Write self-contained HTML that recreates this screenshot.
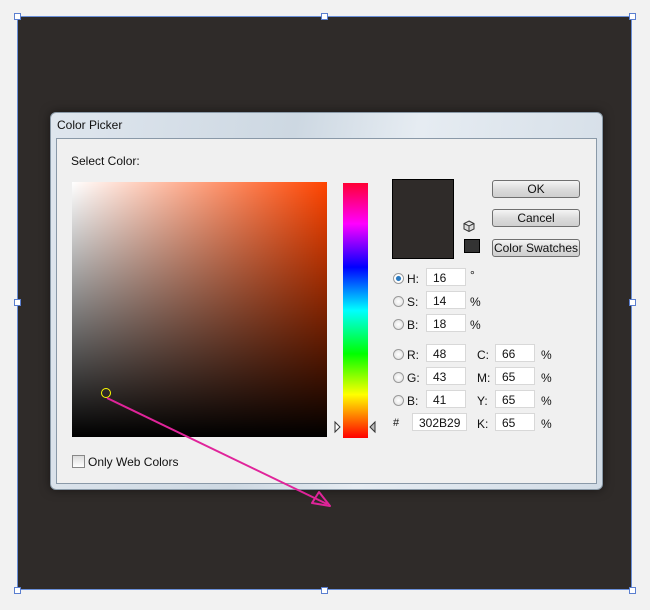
<!DOCTYPE html>
<html><head><style>
body{margin:0;width:650px;height:610px;background:#f2f2f2;position:relative;overflow:hidden;font-family:"Liberation Sans",sans-serif;font-size:12px;color:#111}
.a{position:absolute}
.h{position:absolute;width:5px;height:5px;background:#fff;border:1px solid #5b7fd0}
.btn{position:absolute;left:492px;width:86px;height:16px;border:1px solid #707070;border-radius:3px;background:linear-gradient(#f4f4f4,#dcdcdc 50%,#cfcfcf);text-align:center;line-height:16px;font-size:12px}
.in{position:absolute;width:40px;height:18px;background:#fff;border:1px solid #d8d8d8;line-height:18px;box-sizing:border-box;padding-left:6px;font-size:12px}
.rd{position:absolute;width:11px;height:11px;border-radius:50%;border:1px solid #9a9a9a;background:radial-gradient(#fff,#ddd);box-sizing:border-box}
.lb{position:absolute;font-size:12px}
</style></head><body>
<div class="a" style="left:17px;top:16px;width:615px;height:574px;background:#2f2b29;border:1px solid #6a8fd8;box-sizing:border-box"></div>
<div class="h" style="left:14px;top:13px"></div><div class="h" style="left:321px;top:13px"></div><div class="h" style="left:629px;top:13px"></div>
<div class="h" style="left:14px;top:299px"></div><div class="h" style="left:629px;top:299px"></div>
<div class="h" style="left:14px;top:587px"></div><div class="h" style="left:321px;top:587px"></div><div class="h" style="left:629px;top:587px"></div>
<div class="a" style="left:50px;top:112px;width:553px;height:378px;border-radius:6px;background:linear-gradient(100deg,#dfe6ee,#cdd8e2 40%,#e6ecf2 60%,#d2dce6);border:1px solid #8a9aa8;box-sizing:border-box;box-shadow:0 0 10px rgba(0,0,0,.5)"></div>
<div class="lb" style="left:57px;top:118px">Color Picker</div>
<div class="a" style="left:56px;top:138px;width:541px;height:346px;background:#f0f0f0;border:1px solid #8a99a8;box-sizing:border-box"></div>
<div class="lb" style="left:71px;top:154px">Select Color:</div>
<div class="a" style="left:72px;top:182px;width:255px;height:255px;background:linear-gradient(transparent,#000),linear-gradient(90deg,#fff,#ff4400)"></div>
<div class="a" style="left:101px;top:388px;width:8px;height:8px;border:1px solid #ff0;border-radius:50%"></div>
<div class="a" style="left:343px;top:183px;width:25px;height:255px;background:linear-gradient(#ff0033,#ff00ff 16%,#0000ff 33%,#00ffff 50%,#00ff00 67%,#ffff00 83%,#ff0000)"></div>
<svg class="a" style="left:332px;top:420px" width="46" height="16"><path d="M3 2 L8 7 L3 12 Z" fill="#fff" stroke="#333"/><path d="M43 2 L38 7 L43 12 Z" fill="#bbb" stroke="#333"/></svg>
<div class="a" style="left:392px;top:179px;width:62px;height:80px;background:#2f2b29;border:1px solid #000;box-sizing:border-box"></div>
<svg class="a" style="left:463px;top:220px" width="12" height="12"><path d="M6 1 L11 3.5 L11 9 L6 11.5 L1 9 L1 3.5 Z M1 3.5 L6 6 L11 3.5 M6 6 L6 11.5" fill="#ddd" stroke="#333"/></svg>
<div class="a" style="left:464px;top:239px;width:16px;height:14px;background:#333;border:1px solid #000;box-sizing:border-box"></div>
<div class="btn" style="top:180px">OK</div>
<div class="btn" style="top:209px">Cancel</div>
<div class="btn" style="top:239px">Color Swatches</div>
<div class="rd" style="left:393px;top:273px;background:radial-gradient(#2a7ac0 35%,#fff 45%)"></div><div class="lb" style="left:407px;top:272px">H:</div><div class="in" style="left:426px;top:268px">16</div><div class="lb" style="left:470px;top:268px">°</div>
<div class="rd" style="left:393px;top:296px"></div><div class="lb" style="left:407px;top:295px">S:</div><div class="in" style="left:426px;top:291px">14</div><div class="lb" style="left:470px;top:295px">%</div>
<div class="rd" style="left:393px;top:319px"></div><div class="lb" style="left:407px;top:318px">B:</div><div class="in" style="left:426px;top:314px">18</div><div class="lb" style="left:470px;top:318px">%</div>
<div class="rd" style="left:393px;top:349px"></div><div class="lb" style="left:407px;top:348px">R:</div><div class="in" style="left:426px;top:344px">48</div>
<div class="rd" style="left:393px;top:372px"></div><div class="lb" style="left:407px;top:371px">G:</div><div class="in" style="left:426px;top:367px">43</div>
<div class="rd" style="left:393px;top:395px"></div><div class="lb" style="left:407px;top:394px">B:</div><div class="in" style="left:426px;top:390px">41</div>
<div class="lb" style="left:393px;top:417px;font-size:11px">#</div><div class="in" style="left:412px;top:413px;width:55px;padding-left:6px">302B29</div>
<div class="lb" style="left:477px;top:348px">C:</div><div class="in" style="left:495px;top:344px">66</div><div class="lb" style="left:541px;top:348px">%</div>
<div class="lb" style="left:477px;top:371px">M:</div><div class="in" style="left:495px;top:367px">65</div><div class="lb" style="left:541px;top:371px">%</div>
<div class="lb" style="left:477px;top:394px">Y:</div><div class="in" style="left:495px;top:390px">65</div><div class="lb" style="left:541px;top:394px">%</div>
<div class="lb" style="left:477px;top:417px">K:</div><div class="in" style="left:495px;top:413px">65</div><div class="lb" style="left:541px;top:417px">%</div>
<div class="a" style="left:72px;top:455px;width:11px;height:11px;border:1px solid #888;background:linear-gradient(#ddd,#fff)"></div>
<div class="lb" style="left:88px;top:455px">Only Web Colors</div>
<svg class="a" style="left:0;top:0" width="650" height="610"><path d="M107 398 L327 504" stroke="#e0249a" stroke-width="2"/><path d="M312 503 L330 506 L319 492 Z" fill="none" stroke="#e0249a" stroke-width="2" stroke-linejoin="round"/></svg>
</body></html>
